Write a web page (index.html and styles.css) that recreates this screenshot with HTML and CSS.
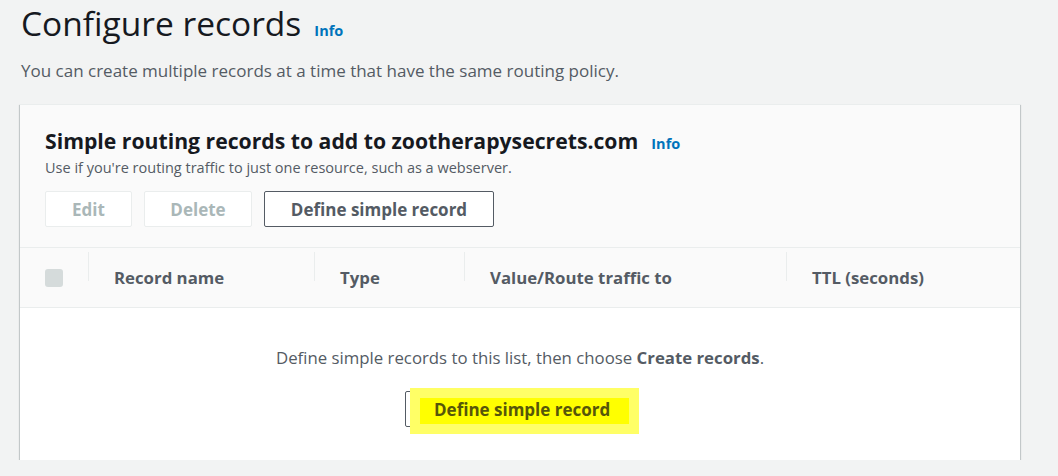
FILE: index.html
```html
<!DOCTYPE html>
<html>
<head>
<meta charset="utf-8">
<link rel="stylesheet" href="styles.css">
</head>
<body>
<div class="page">
  <div class="title-row">
    <h1 class="title">Configure records</h1>
    <a class="info info-lg">Info</a>
  </div>
  <p class="subtitle">You can create multiple records at a time that have the same routing policy.</p>

  <div class="panel">
    <div class="panel-head">
      <div class="head-row">
        <h2 class="panel-title">Simple routing records to add to zootherapysecrets.com</h2>
        <a class="info">Info</a>
      </div>
      <p class="panel-desc">Use if you're routing traffic to just one resource, such as a webserver.</p>
      <div class="actions">
        <button class="btn btn-disabled btn-edit">Edit</button>
        <button class="btn btn-disabled btn-delete">Delete</button>
        <button class="btn btn-define">Define simple record</button>
      </div>
    </div>
    <div class="table-head">
      <div class="cell cell-check"><span class="checkbox"></span></div>
      <div class="cell sep">Record name</div>
      <div class="cell sep">Type</div>
      <div class="cell sep">Value/Route traffic to</div>
      <div class="cell sep">TTL (seconds)</div>
    </div>
    <div class="table-empty">
      <p class="empty-text">Define simple records to this list, then choose <b>Create records</b>.</p>
      <button class="btn btn-hl"><span class="btn-label">Define simple record</span></button>
    </div>
  </div>
</div>
</body>
</html>
```

FILE: styles.css
```css
* { box-sizing: border-box; }
html, body {
  margin: 0;
  padding: 0;
  background: #f2f3f3;
  font-family: "Open Sans", Lato, Arial, sans-serif;
}
.page {
  padding: 0 38px 0 20px;
}
.title-row {
  display: flex;
  align-items: baseline;
  padding-left: 1px;
  height: 50px;
}
.title {
  margin: 0;
  font-size: 33.5px;
  font-weight: 400;
  line-height: 46px;
  color: #16191f;
}
.info {
  color: #0073bb;
  font-weight: 700;
  font-size: 14.5px;
  margin-left: 13px;
}
.info-lg { margin-left: 13px; }
.subtitle {
  margin: 9px 0 0 1px;
  font-size: 17px;
  line-height: 24px;
  color: #545b64;
}
.panel {
  margin-top: 21px;
  width: 1000px;
  background: #fff;
  box-shadow: 0 1px 1px 0 rgba(0,28,36,.3), 1px 1px 1px 0 rgba(0,28,36,.15), -1px 1px 1px 0 rgba(0,28,36,.15);
  border-top: 1px solid #eaeded;
}
.panel-head {
  background: #fafafa;
  padding: 20px 25px 20px 25px;
}
.head-row {
  display: flex;
  align-items: baseline;
}
.panel-title {
  margin: 0;
  font-size: 21.2px;
  font-weight: 700;
  line-height: 32px;
  color: #16191f;
}
.panel-desc {
  margin: 1px 0 0;
  font-size: 14.5px;
  line-height: 20px;
  color: #545b64;
}
.actions {
  display: flex;
  gap: 12px;
  margin-top: 13px;
}
.btn {
  height: 36px;
  padding: 0;
  border: 1px solid #545b64;
  border-radius: 2px;
  background: #fff;
  font-family: inherit;
  font-size: 17px;
  font-weight: 700;
  color: #545b64;
}
.btn-disabled {
  border-color: #eaeded;
  color: #aab7b8;
}
.btn-edit { width: 87px; }
.btn-delete { width: 108px; }
.btn-define { width: 230px; }
.table-head {
  display: grid;
  grid-template-columns: 68px 226px 150px 322px 1fr;
  height: 61px;
  align-items: center;
  background: #fafafa;
  border-top: 1px solid #eaeded;
  border-bottom: 1px solid #eaeded;
  font-size: 16.8px;
  font-weight: 700;
  color: #545b64;
}
.cell {
  position: relative;
  padding-left: 26px;
}
.cell-check {
  padding-left: 25px;
  display: flex;
}
.sep::before {
  content: "";
  position: absolute;
  left: 0;
  top: -14px;
  height: 29px;
  width: 1px;
  background: #eaeded;
}
.checkbox {
  width: 18px;
  height: 18px;
  border-radius: 3px;
  background: #d5dbdb;
}
.table-empty {
  background: #fff;
  display: flex;
  flex-direction: column;
  align-items: center;
  padding: 38px 0 33px;
}
.empty-text {
  margin: 0;
  font-size: 16.8px;
  line-height: 24px;
  color: #545b64;
}
.btn-hl {
  position: relative;
  margin-top: 21px;
  width: 230px;
  text-align: left;
}
.btn-hl::before {
  content: "";
  position: absolute;
  left: 4px;
  top: -4px;
  width: 229px;
  height: 46px;
  background: #ffff66;
  z-index: 0;
}
.btn-hl::after {
  content: "";
  position: absolute;
  left: 14px;
  top: 6px;
  width: 209px;
  height: 26px;
  background: #ffff00;
  z-index: 0;
}
.btn-label {
  position: relative;
  z-index: 1;
  padding-left: 28px;
  color: #56560a;
}
```
